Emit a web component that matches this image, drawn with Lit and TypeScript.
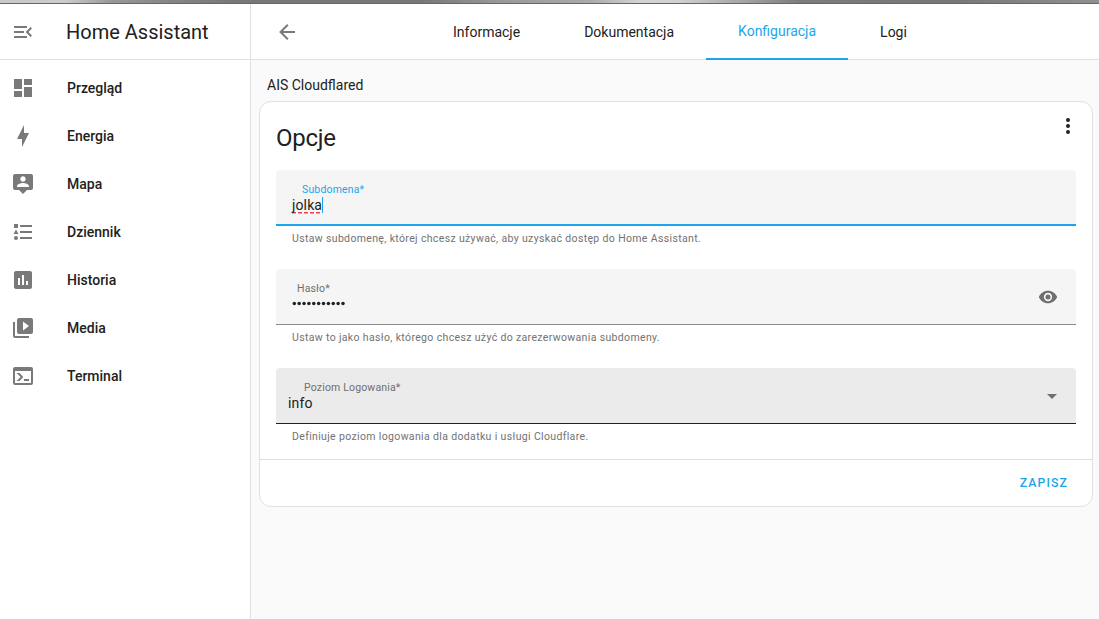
import { LitElement, html, css, svg } from "lit";
import { customElement } from "lit/decorators.js";

const icons = {
  menuOpen: "M21,15.61L19.59,17L14.58,12L19.59,7L21,8.39L17.44,12L21,15.61M3,6H16V8H3V6M3,13V11H13V13H3M3,18V16H16V18H3Z",
  dashboard: "M13,3V9H21V3M13,21H21V11H13M3,21H11V15H3M3,13H11V3H3V13Z",
  flash: "M11 15H6L13 1V9H18L11 23V15Z",
  map: "M20,2H4A2,2 0 0,0 2,4V16A2,2 0 0,0 4,18H8L12,22L16,18H20A2,2 0 0,0 22,16V4A2,2 0 0,0 20,2M12,4.3C13.5,4.3 14.7,5.5 14.7,7C14.7,8.5 13.5,9.7 12,9.7C10.5,9.7 9.3,8.5 9.3,7C9.3,5.5 10.5,4.3 12,4.3M18,15H6V14.1C6,12.1 10,11 12,11C14,11 18,12.1 18,14.1V15Z",
  list: "M5,9.5L7.5,14H2.5L5,9.5M3,4H7V8H3V4M5,20A2,2 0 0,0 7,18A2,2 0 0,0 5,16A2,2 0 0,0 3,18A2,2 0 0,0 5,20M9,5V7H21V5H9M9,19H21V17H9V19M9,13H21V11H9V13Z",
  chart: "M9 17H7V10H9V17M13 17H11V7H13V17M17 17H15V13H17V17M19 3H5C3.9 3 3 3.9 3 5V19C3 20.1 3.9 21 5 21H19C20.1 21 21 20.1 21 19V5C21 3.9 20.1 3 19 3Z",
  media: "M4,6H2V20A2,2 0 0,0 4,22H18V20H4V6M20,2H8A2,2 0 0,0 6,4V16A2,2 0 0,0 8,18H20A2,2 0 0,0 22,16V4A2,2 0 0,0 20,2M12,14.5V5.5L18,10L12,14.5Z",
  console: "M20,19V7H4V19H20M20,3A2,2 0 0,1 22,5V19A2,2 0 0,1 20,21H4A2,2 0 0,1 2,19V5C2,3.89 2.9,3 4,3H20M13,17V15H18V17H13M9.58,13L5.57,9H8.4L11.7,12.3C12.09,12.69 12.09,13.33 11.7,13.72L8.42,17H5.59L9.58,13Z",
  back: "M20,11V13H8L13.5,18.5L12.08,19.92L4.16,12L12.08,4.08L13.5,5.5L8,11H20Z",
  dots: "M12,16A2,2 0 0,1 14,18A2,2 0 0,1 12,20A2,2 0 0,1 10,18A2,2 0 0,1 12,16M12,10A2,2 0 0,1 14,12A2,2 0 0,1 12,14A2,2 0 0,1 10,12A2,2 0 0,1 12,10M12,4A2,2 0 0,1 14,6A2,2 0 0,1 12,8A2,2 0 0,1 10,6A2,2 0 0,1 12,4Z",
  eye: "M12,9A3,3 0 0,0 9,12A3,3 0 0,0 12,15A3,3 0 0,0 15,12A3,3 0 0,0 12,9M12,17A5,5 0 0,1 7,12A5,5 0 0,1 12,7A5,5 0 0,1 17,12A5,5 0 0,1 12,17M12,4.5C7,4.5 2.73,7.61 1,12C2.73,16.39 7,19.5 12,19.5C17,19.5 21.27,16.39 23,12C21.27,7.61 17,4.5 12,4.5Z",
  caret: "M7,10L12,15L17,10H7Z",
};

const icon = (path: string, size = 24) =>
  html`<svg class="icon" width=${size} height=${size} viewBox="0 0 24 24">${svg`<path d=${path}></path>`}</svg>`;

const navItems: [string, string][] = [
  [icons.dashboard, "Przegląd"],
  [icons.flash, "Energia"],
  [icons.map, "Mapa"],
  [icons.list, "Dziennik"],
  [icons.chart, "Historia"],
  [icons.media, "Media"],
  [icons.console, "Terminal"],
];

const tabs = ["Informacje", "Dokumentacja", "Konfiguracja", "Logi"];

@customElement("app-root")
export class AppRoot extends LitElement {
  static styles = css`
    :host {
      display: flex;
      flex-direction: column;
      height: 100vh;
      overflow: hidden;
      box-sizing: border-box;
      background: #fafafa;
      color: #212121;
      font: 400 14px/20px Roboto, sans-serif;
    }
    * { box-sizing: border-box; }
    .icon { display: block; flex: none; fill: currentColor; }
    .strip {
      flex: none;
      height: 4px;
      border-bottom: 1px solid #666;
      background: linear-gradient(90deg, #c8c8c8 0, #ccc 65px, #999 110px, #858585 170px, #777 240px, #777 420px, #999 500px, #aaa 590px, #d4d4d4 640px, #d0d0d0 680px, #a0a0a0 750px, #7c7c7c 800px, #777 950px, #909090 1099px);
    }
    .shell { flex: 1; display: flex; min-height: 0; }
    .sidebar { width: 251px; flex: none; background: #fff; border-right: 1px solid #e0e0e0; }
    .brand {
      display: flex;
      align-items: center;
      gap: 31px;
      height: 56px;
      padding-left: 11px;
      border-bottom: 1px solid #e0e0e0;
      font-size: 20px;
    }
    .brand .icon, .nav .icon, .back { color: #797979; }
    .nav { padding-top: 4px; }
    .nav-item {
      display: flex;
      align-items: center;
      gap: 32px;
      height: 48px;
      padding-left: 11px;
      font-weight: 500;
    }
    .main { flex: 1; min-width: 0; }
    .header { display: flex; height: 56px; background: #fff; border-bottom: 1px solid #e0e0e0; }
    .back { display: flex; align-items: center; width: 170px; padding-left: 24px; }
    .tab { height: 56px; padding: 18px 32px; }
    .tab.active { color: #1da5ec; border-bottom: 2px solid #1da5ec; padding-top: 17px; }
    .addon { padding: 15px 16px 6px; }
    .card {
      width: 834px;
      margin-left: 8px;
      background: #fff;
      border: 1px solid #e0e0e0;
      border-radius: 12px;
    }
    .card-head { display: flex; justify-content: space-between; height: 68px; padding: 12px 12px 0 16px; }
    .card-title { font-size: 24px; line-height: 48px; letter-spacing: -0.29px; }
    .fields { display: flex; flex-direction: column; gap: 15px; padding: 0 16px 7px; }
    .box {
      display: flex;
      align-items: center;
      justify-content: space-between;
      height: 56px;
      padding: 0 16px;
      background: #f5f5f5;
      border-bottom: 1px solid #8c8c8c;
      border-radius: 4px 4px 0 0;
      color: #6f6f6f;
    }
    .box.focus { border-bottom: 2px solid #1da5ec; }
    .box.secret { padding-right: 18px; }
    .box.select { background: #ebebeb; border-color: #212121; padding: 0 12px; }
    .content { align-self: flex-start; padding-top: 11px; }
    .label {
      width: max-content;
      height: 16px;
      font-size: 14px;
      line-height: 23px;
      letter-spacing: 0.22px;
      transform: scale(0.75);
      transform-origin: left top;
    }
    .focus .label { color: #1da5ec; margin-left: 10px; }
    .secret .label { margin-left: 5px; }
    .select .label { margin-left: 16px; }
    .value { display: flex; align-items: center; height: 16px; font-size: 14px; letter-spacing: 0.13px; color: #212121; }
    .spell { background: repeating-linear-gradient(90deg, #f0404f 0 4px, transparent 4px 6px) 0 100% / 100% 1.5px no-repeat; line-height: 17px; }
    .caret { width: 1px; height: 16px; background: #1da5ec; }
    .dots { fill: #212121; display: block; }
    .helper { height: 28px; padding: 4px 16px 0; font-size: 10.5px; line-height: 18px; letter-spacing: 0.35px; color: #727272; }
    .actions {
      display: flex;
      justify-content: flex-end;
      height: 47px;
      padding: 13px 24px 0 0;
      border-top: 1px solid #e0e0e0;
      color: #1da5ec;
      font-size: 12.25px;
      font-weight: 500;
      letter-spacing: 1.1px;
    }
  `;

  render() {
    return html`
      <div class="strip"></div>
      <div class="shell">
        <aside class="sidebar">
          <div class="brand">${icon(icons.menuOpen)}<span>Home Assistant</span></div>
          <nav class="nav">
            ${navItems.map(([path, name]) => html`<div class="nav-item">${icon(path)}<span>${name}</span></div>`)}
          </nav>
        </aside>
        <main class="main">
          <header class="header">
            <div class="back">${icon(icons.back)}</div>
            ${tabs.map((t) => html`<div class="tab ${t === "Konfiguracja" ? "active" : ""}">${t}</div>`)}
          </header>
          <div class="addon">AIS Cloudflared</div>
          <section class="card">
            <div class="card-head"><span class="card-title">Opcje</span>${icon(icons.dots)}</div>
            <div class="fields">
              <div>
                <div class="box focus">
                  <div class="content">
                    <div class="label">Subdomena*</div>
                    <div class="value"><span class="spell">jolka</span><span class="caret"></span></div>
                  </div>
                </div>
                <div class="helper">Ustaw subdomenę, której chcesz używać, aby uzyskać dostęp do Home Assistant.</div>
              </div>
              <div>
                <div class="box secret">
                  <div class="content">
                    <div class="label">Hasło*</div>
                    <div class="value">
                      <svg class="dots" width="56" height="16" viewBox="0 0 56 16">
                        ${Array.from({ length: 11 }, (_, i) => svg`<circle cx=${2.3 + i * 4.87} cy="7.5" r="1.75"></circle>`)}
                      </svg>
                    </div>
                  </div>
                  ${icon(icons.eye, 20)}
                </div>
                <div class="helper">Ustaw to jako hasło, którego chcesz użyć do zarezerwowania subdomeny.</div>
              </div>
              <div>
                <div class="box select">
                  <div class="content">
                    <div class="label">Poziom Logowania*</div>
                    <div class="value">info</div>
                  </div>
                  ${icon(icons.caret)}
                </div>
                <div class="helper">Definiuje poziom logowania dla dodatku i usługi Cloudflare.</div>
              </div>
            </div>
            <div class="actions">ZAPISZ</div>
          </section>
        </main>
      </div>
    `;
  }
}
